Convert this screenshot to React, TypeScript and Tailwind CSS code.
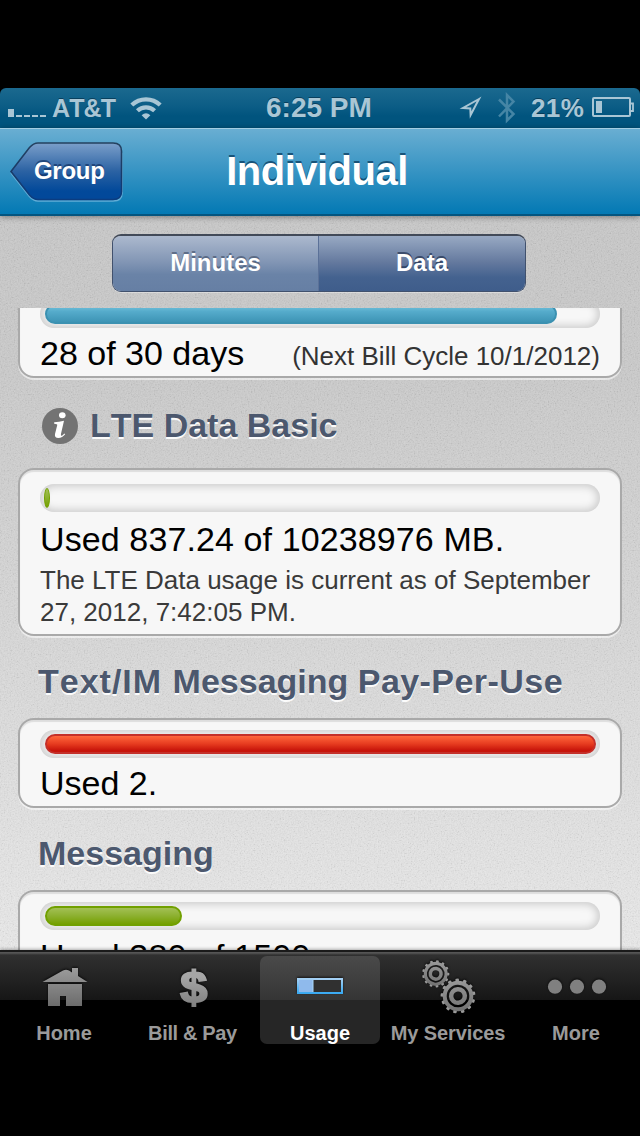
import React from "react";

const FONT = "font-['Liberation_Sans',Arial,sans-serif]";

function SignalIcon() {
  return (
    <svg width="39" height="10" viewBox="0 0 39 10" fill="#a9c6d5" className="mt-[10px]">
      <rect x="0" y="1" width="6" height="8" />
      <rect x="8" y="7" width="6" height="2" />
      <rect x="16" y="7" width="6" height="2" />
      <rect x="24" y="7" width="6" height="2" />
      <rect x="32" y="7" width="6" height="2" />
    </svg>
  );
}

function WifiIcon() {
  return (
    <svg width="32" height="24" viewBox="0 0 32 24" fill="none" stroke="#a9c6d5" strokeWidth="4.2">
      <path d="M1.8 9 A20.5 20.5 0 0 1 30.2 9" />
      <path d="M7.4 14.8 A12.5 12.5 0 0 1 24.6 14.8" />
      <path d="M16 23.4 L11.6 19.2 Q16 15.4 20.4 19.2 Z" fill="#a9c6d5" stroke="none" />
    </svg>
  );
}

function LocationIcon() {
  return (
    <svg width="24" height="24" viewBox="0 0 24 24" fill="none" stroke="#a9c6d5" strokeWidth="2">
      <path d="M20 3 L4 12 L11.300 12.500 L11.600 19 Z" strokeLinejoin="miter" />
    </svg>
  );
}

function BluetoothIcon() {
  return (
    <svg width="18" height="32" viewBox="0 0 18 32" fill="none" stroke="#4585a5" strokeWidth="2.5">
      <path d="M1 7.500 L15.500 22 L9 28.500 L9 3 L15.500 9.500 L1 24.500" />
    </svg>
  );
}

function BatteryIcon() {
  return (
    <svg width="43" height="22" viewBox="0 0 43 22">
      <rect x="1" y="1" width="37" height="18" rx="1" fill="none" stroke="#a9c6d5" strokeWidth="2" />
      <rect x="4" y="4" width="6" height="12" fill="#a9c6d5" />
      <path d="M38 6.500 h3 v7.500 h-3" fill="none" stroke="#a9c6d5" strokeWidth="1.800" />
    </svg>
  );
}

function StatusBar() {
  return (
    <div className="bg-black">
      <div className="grid h-10 grid-cols-[266px_107px_1fr] items-center rounded-t-[6px] bg-[linear-gradient(#1b698f_0%,#0c5d86_45%,#01547e_70%,#01547e_100%)] font-bold text-[#a9c6d5] [text-shadow:0_-1px_0_rgba(0,30,50,0.5)]">
        <div className="flex items-center pl-2">
          <SignalIcon />
          <span className="ml-[5px] w-[63px] text-[25px] leading-[40px] tracking-[-0.9px]">AT&amp;T</span>
          <span className="ml-[15px] mt-[-1px]">
            <WifiIcon />
          </span>
        </div>
        <span className="whitespace-nowrap text-[28px] leading-[40px]">6:25 PM</span>
        <div className="flex items-center">
          <span className="ml-[86px]">
            <LocationIcon />
          </span>
          <span className="ml-[15px]">
            <BluetoothIcon />
          </span>
          <span className="ml-[15px] text-[26px] leading-[40px] tracking-[0.4px]">21%</span>
          <span className="ml-[8px]">
            <BatteryIcon />
          </span>
        </div>
      </div>
    </div>
  );
}

function NavBar() {
  return (
    <header className="relative z-10 grid h-[88px] grid-cols-[130px_374px_1fr] items-center border-t border-b-2 border-t-[#a3cde2] border-b-[#035580] bg-[linear-gradient(#69aed2,#0379b4)] shadow-[0_1px_6px_rgba(0,0,0,0.4)]">
      <button className="relative ml-[9px] flex h-[60px] w-[115px] items-center">
        <svg width="115" height="60" viewBox="0 0 115 60" className="absolute inset-0">
          <defs>
            <linearGradient id="back" x1="0" y1="0" x2="0" y2="1">
              <stop offset="0" stopColor="#7b9fca" />
              <stop offset="0.5" stopColor="#2b62a3" />
              <stop offset="0.85" stopColor="#02499a" />
              <stop offset="1" stopColor="#02489a" />
            </linearGradient>
            <linearGradient id="backEdge" x1="0" y1="0" x2="0" y2="1">
              <stop offset="0" stopColor="#24415f" />
              <stop offset="0.6" stopColor="#173a6b" />
              <stop offset="1" stopColor="#0b3c80" />
            </linearGradient>
          </defs>
          <path d="M2 31 L20.500 54.500 Q24.500 59 29 59 H104 Q113 59 113 51 V11" fill="none" stroke="#62add6" strokeWidth="1.600" />
          <path d="M2 29.500 L20.500 5.500 Q24.500 1 29 1 H104 Q112.500 1 112.500 9 V49.500 Q112.500 57.500 104 57.500 H29 Q24.500 57.500 20.500 53 Z" fill="url(#back)" stroke="url(#backEdge)" strokeWidth="1.600" />
        </svg>
        <span className="relative -mt-[2px] pl-[25px] text-[24px] font-bold leading-[60px] tracking-[-0.3px] text-white [text-shadow:0_-2px_0_rgba(10,40,90,0.6)]">Group</span>
      </button>
      <h1 className="-mt-[2px] text-center text-[40px] font-bold leading-[84px] tracking-[-0.5px] text-white [text-shadow:0_-2px_0_rgba(10,60,95,0.75)]">Individual</h1>
    </header>
  );
}

function SegmentedControl() {
  return (
    <div className="flex h-[92px] justify-center pt-[18px] pr-[2px]">
      <div className="flex h-[58px] w-[414px] overflow-hidden rounded-[9px] border border-t-2 border-[#41516d] border-t-[#424a58] text-[24px] font-bold leading-[53px] text-white shadow-[0_1px_0_rgba(255,255,255,0.35)]">
        <button className="w-[206px] border-r border-[#5b7198] bg-[linear-gradient(#acb9ce_0%,#8195b4_48%,#6a83a7_70%,#667fa4_100%)] pb-[2px] [text-shadow:0_-2px_0_rgba(60,75,100,0.6)]">Minutes</button>
        <button className="flex-1 bg-[linear-gradient(#98a9c3_0%,#64799e_48%,#44628f_75%,#3f5d8b_100%)] pb-[2px] [text-shadow:0_-2px_0_rgba(35,50,80,0.7)]">Data</button>
      </div>
    </div>
  );
}

type Tone = "blue" | "green" | "red";

const TONES: Record<Tone, string> = {
  blue: "bg-[linear-gradient(#6fc0da,#55abcb_35%,#3d94b5)] border-[#3b91b1]",
  green: "bg-[linear-gradient(#a3c055,#8cb02f_50%,#75a000)] border-[#71a000]",
  red: "bg-[linear-gradient(#ff663c,#e63b1f_50%,#c7140a_90%)] border-[#c4302a]",
};

function Meter({ width, tone }: { width: number; tone: Tone }) {
  return (
    <div className="h-7 w-[560px] rounded-full bg-[#f7f7f7] p-1 shadow-[inset_0_0_9px_2px_rgba(0,0,0,0.19)]">
      <div
        className={`h-5 ${width < 20 ? "rounded-[50%] border" : "ml-[0.5px] rounded-full border-2"} ${TONES[tone]}`}
        style={{ width }}
      />
    </div>
  );
}

function Card({ children, className }: { children: React.ReactNode; className: string }) {
  return (
    <section className={`mx-[18px] shrink-0 rounded-[16px] border-2 border-[#a9a9a9] bg-[#f7f7f7] px-5 shadow-[0_2px_0_rgba(255,255,255,0.55),inset_0_2px_1px_rgba(0,0,0,0.1)] ${className}`}>
      {children}
    </section>
  );
}

function Heading({ children, className }: { children: React.ReactNode; className: string }) {
  return (
    <h2 className={`flex items-center text-[34px] font-bold leading-[40px] text-[#4c586e] [text-shadow:0_2px_0_#fbfbfb] ${className}`}>
      {children}
    </h2>
  );
}

function InfoIcon() {
  return (
    <svg width="36" height="36" viewBox="0 0 36 36" className="ml-1 mr-3 mt-[2px]">
      <circle cx="18" cy="18" r="18" fill="#737373" />
      <ellipse cx="20.300" cy="7.200" rx="3.300" ry="3" fill="#fff" />
      <path d="M12.200 14.300 Q17 13.700 22 12.700 L19 25.800 Q18.500 28.300 19.900 27.700 Q21.200 27 22.300 25.600 L23.200 26.300 Q20.300 30 16.400 30 Q12.300 29.900 13 25.900 L15.200 17.200 Q15.500 15.600 12.100 15.700 Z" fill="#fff" />
    </svg>
  );
}

function UsageList() {
  return (
    <main className="flex h-[642px] flex-col overflow-hidden text-[34px] leading-[40px] text-black">
      <Card className="-mt-5 h-[90px] pt-[10px]">
        <Meter width={512} tone="blue" />
        <div className="flex items-baseline justify-between pt-[5px] leading-[40px]">
          <span>28 of 30 days</span>
          <span className="text-[26px] text-[#333]">(Next Bill Cycle 10/1/2012)</span>
        </div>
      </Card>
      <Heading className="ml-[38px] mt-[27px]">
        <InfoIcon />
        LTE Data Basic
      </Heading>
      <Card className="mt-[23px] h-[168px] pt-[14px]">
        <Meter width={6} tone="green" />
        <p className="mt-[7px] tracking-[0.11px]">Used 837.24 of 10238976 MB.</p>
        <p className="mt-[5px] whitespace-nowrap text-[26px] leading-8 text-[#3a3a3a] [font-kerning:normal]">
          The LTE Data usage is current as of September
          <br />
          27, 2012, 7:42:05 PM.
        </p>
      </Card>
      <Heading className="ml-[38px] mt-[25px]">
        <span className="whitespace-pre tracking-[1px]">{"Text/IM "}</span>
        <span className="whitespace-pre">{"Messaging "}</span>
        <span className="tracking-[0.45px]">Pay-Per-Use</span>
      </Heading>
      <Card className="mt-[17px] h-[90px] pt-[10px]">
        <Meter width={551} tone="red" />
        <p className="mt-[5px]">Used 2.</p>
      </Card>
      <Heading className="ml-[38px] mt-[25px]">Messaging</Heading>
      <Card className="mt-[17px] h-[100px] pt-[10px]">
        <Meter width={137} tone="green" />
        <p className="mt-[6px] tracking-[0.11px]">Used 380 of 1500.</p>
      </Card>
    </main>
  );
}

function Gear({ cx, cy, r, teeth, turn }: { cx: number; cy: number; r: number; teeth: number; turn: number }) {
  return (
    <g transform={`translate(${cx} ${cy}) rotate(${turn}) scale(${r / 17})`} stroke="url(#metal)" fill="none">
      {Array.from({ length: teeth }, (_, i) => (
        <rect key={i} x="-1.700" y="-17" width="3.400" height="4" rx="0.800" fill="url(#metal)" stroke="none" transform={`rotate(${(360 / teeth) * i})`} />
      ))}
      <circle r="13" strokeWidth="3.900" />
      <circle r="6.700" strokeWidth="4.400" />
    </g>
  );
}

function Metal() {
  return (
    <linearGradient id="metal" gradientUnits="userSpaceOnUse" x1="0" y1="-26" x2="0" y2="26">
      <stop offset="0" stopColor="#a6a6a6" />
      <stop offset="1" stopColor="#646464" />
    </linearGradient>
  );
}

function TabIcon({ name }: { name: string }) {
  return (
    <svg width="64" height="60" viewBox="-32 -30 64 60" className="shrink-0 [filter:drop-shadow(0_-1px_1px_rgba(0,0,0,0.7))]">
      <defs>
        <Metal />
        <linearGradient id="glow" x1="0" y1="0" x2="0" y2="1">
          <stop offset="0" stopColor="#a4d0f4" />
          <stop offset="1" stopColor="#3aaaf2" />
        </linearGradient>
      </defs>
      {name === "Home" && (
        <g fill="url(#metal)">
          <path d="M-21.500 -4 L-1 -15.500 Q2 -17 5 -15.500 L8 -13.500 V-18 H14 V-10 L23.500 -4 Z" />
          <path d="M-16 -2 H18 V20 H2 V10 H-4 V20 H-16 Z" />
        </g>
      )}
      {name === "Bill & Pay" && (
        <text transform="translate(1.800 16.500) scale(1.080 1)" textAnchor="middle" fontSize="45" fontWeight="bold" fill="url(#metal)" stroke="url(#metal)" strokeWidth="2">$</text>
      )}
      {name === "Usage" && (
        <g>
          <rect x="-22" y="-7" width="44" height="14" fill="#303030" stroke="url(#glow)" strokeWidth="2" />
          <rect x="-21" y="-6" width="14" height="12" fill="#8fbaec" />
          <path d="M-7 -6 V6" stroke="#a9d8fa" strokeWidth="1" />
        </g>
      )}
      {name === "My Services" && (
        <g>
          <Gear cx={-12.300} cy={-12.200} r={13.600} teeth={13} turn={8} />
          <Gear cx={10} cy={10} r={17.400} teeth={13} turn={-3} />
        </g>
      )}
      {name === "More" && (
        <g fill="#808080">
          <circle cx="-21" cy="0.700" r="7.100" />
          <circle cx="1" cy="0.700" r="7.100" />
          <circle cx="23" cy="0.700" r="7.100" />
        </g>
      )}
    </svg>
  );
}

function TabBar() {
  const tabs = ["Home", "Bill & Pay", "Usage", "My Services", "More"];
  return (
    <nav className="relative z-10 grid h-[98px] grid-cols-5 border-t-2 border-[#1a1a1a] bg-[linear-gradient(#555_0px,#555_1px,#303030_3px,#161616_48px,#000_48px)] pt-1 shadow-[0_-1px_3px_rgba(0,0,0,0.3)]">
      {tabs.map((t) => (
        <button
          key={t}
          className={`mx-1 flex h-[88px] flex-col items-center rounded-[7px] text-[20px] font-bold leading-[22px] ${
            t === "Usage"
              ? "bg-[linear-gradient(#4a4a4a_0px,#353535_44px,#262626_44px,#262626_100%)] text-white"
              : "text-[#9a9a9a]"
          }`}
        >
          <TabIcon name={t} />
          <span className={`mt-[6px] whitespace-nowrap ${t === "Bill & Pay" ? "pl-[1px] tracking-[-0.35px]" : t === "My Services" ? "tracking-[-0.1px]" : ""}`}>{t}</span>
        </button>
      ))}
    </nav>
  );
}

function Grain() {
  return (
    <svg width="640" height="736" className="pointer-events-none absolute inset-0 opacity-[0.08]">
      <filter id="grain" x="0" y="0" width="100%" height="100%">
        <feTurbulence type="fractalNoise" baseFrequency="0.7" numOctaves="2" seed="4" />
        <feColorMatrix type="matrix" values="1.800 0 0 0 -0.400  1.800 0 0 0 -0.400  1.800 0 0 0 -0.400  0 0 0 0 1" />
      </filter>
      <rect width="640" height="736" filter="url(#grain)" />
    </svg>
  );
}

export default function App() {
  return (
    <div className={`h-[1136px] w-[640px] overflow-hidden bg-black pt-[88px] [font-kerning:none] ${FONT}`}>
      <StatusBar />
      <NavBar />
      <div className="relative h-[734px] overflow-hidden bg-[linear-gradient(#c8c8c8_0%,#cacaca_20%,#d8d8d8_58%,#e9e9e9_100%)]">
        <Grain />
        <div className="relative">
          <SegmentedControl />
          <UsageList />
        </div>
      </div>
      <TabBar />
    </div>
  );
}
